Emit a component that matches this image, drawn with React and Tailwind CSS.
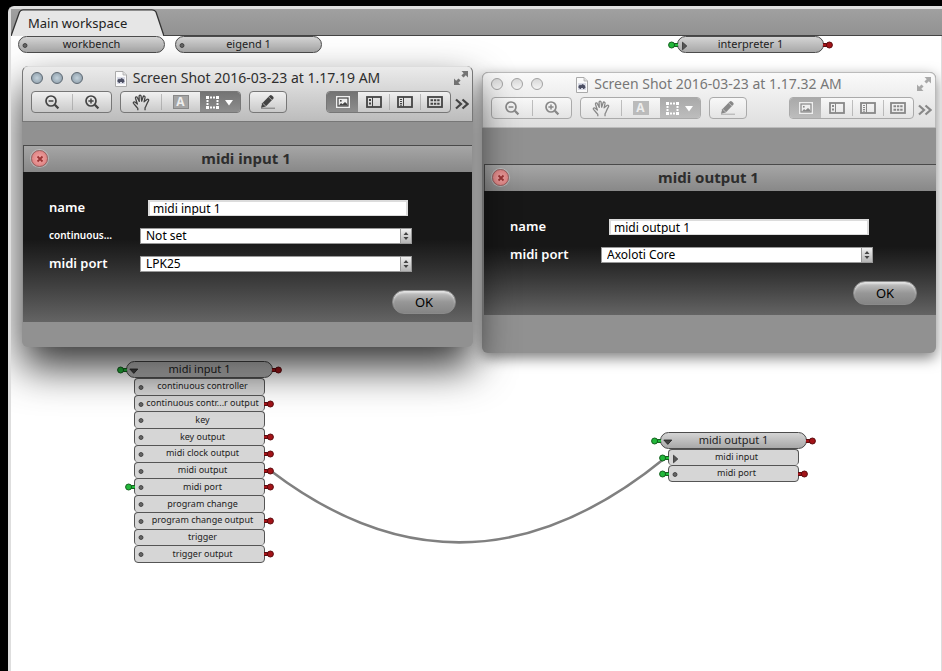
import React from "react";

const inputRows = [
  { name: "continuous controller" },
  { name: "continuous contr...r output", out: true },
  { name: "key" },
  { name: "key output", out: true },
  { name: "midi clock output", out: true },
  { name: "midi output", out: true },
  { name: "midi port", input: true, out: true },
  { name: "program change" },
  { name: "program change output", out: true },
  { name: "trigger" },
  { name: "trigger output", out: true },
];

const outputRows = [
  { name: "midi input", input: true, arrow: true },
  { name: "midi port", input: true, out: true },
];

function GreenPin() {
  return (
    <svg className="absolute top-1/2 right-full -mt-1 h-2 w-2.5" viewBox="0 0 10 8" aria-hidden="true">
      <rect x="4" y="2.5" width="7" height="3" fill="#22b83a" stroke="#14601f" strokeWidth="1" />
      <circle cx="3.6" cy="4" r="3" fill="#22b83a" stroke="#14601f" strokeWidth="1" />
    </svg>
  );
}

function RedPin() {
  return (
    <svg className="absolute top-1/2 left-full -mt-1 h-2 w-2.5" viewBox="0 0 10 8" aria-hidden="true">
      <rect x="-1" y="2.5" width="7" height="3" fill="#a31318" stroke="#5c0b0e" strokeWidth="1" />
      <circle cx="6.4" cy="4" r="3" fill="#a31318" stroke="#5c0b0e" strokeWidth="1" />
    </svg>
  );
}

function Marker({ kind }) {
  return (
    <svg className="absolute top-1/2 left-0.5 -mt-1 h-2.5 w-2.5" viewBox="0 0 10 10" aria-hidden="true">
      {kind === "dot" && <circle cx="4" cy="4.500" r="2" fill="#666" stroke="#333" strokeWidth="0.8" />}
      {kind === "right" && <path d="M2.500 1.200v7.600L6.800 5z" fill="#555" stroke="#333" strokeWidth="0.8" />}
      {kind === "down" && <path d="M.8 3h8L4.800 7.400z" fill="#444" stroke="#222" strokeWidth="0.8" />}
    </svg>
  );
}

function Node({ place, title, marker, pins, rows, rowsHeight }) {
  return (
    <div className={`absolute w-[147px] ${place}`}>
      <div className="relative flex h-[17px] items-center justify-center rounded-full border border-[#4c4c4c] bg-linear-to-b from-[#d4d4d4] to-[#a8a8a8] pb-px text-[11px] leading-4 text-[#222]">
        {pins && <GreenPin />}
        <span className="absolute inset-y-0 left-0 w-3">
          <Marker kind={marker} />
        </span>
        {title}
        {pins && <RedPin />}
      </div>
      {rows && (
        <ul className={`mr-2 ml-2 flex flex-col ${rowsHeight}`}>
          {rows.map((r) => (
            <li
              key={r.name}
              className="relative flex flex-1 items-center justify-center rounded-sm border border-b-0 border-[#555] bg-[#d6d6d6] pb-px pl-1.5 text-[9px] leading-3 whitespace-nowrap text-[#222] last:border-b"
            >
              {r.input && <GreenPin />}
              <Marker kind={r.arrow ? "right" : "dot"} />
              {r.name}
              {r.out && <RedPin />}
            </li>
          ))}
        </ul>
      )}
    </div>
  );
}

function Magnifier({ plus }) {
  return (
    <svg className="h-4 w-4" viewBox="0 0 16 16" fill="none" stroke="currentColor" aria-hidden="true">
      <circle cx="7" cy="7" r="5" strokeWidth="1.700" />
      <path d="M10.800 10.800L14.400 14.400" strokeWidth="2.200" />
      <path d={plus ? "M4.400 7h5.200M7 4.400v5.200" : "M4.600 7h4.800"} strokeWidth="1.500" />
    </svg>
  );
}

function Hand() {
  return (
    <svg className="h-[17px] w-[18px]" viewBox="0 0 16 16" fill="none" stroke="currentColor" strokeWidth="1.200" strokeLinejoin="round" aria-hidden="true">
      <path d="M5 15.300V13.500C3.500 12 2.500 10.500.9 8.800.3 7.800 1.600 6.900 2.600 7.700L4.600 9.400 2.800 4C2.500 2.600 4.100 2.200 4.600 3.400L6.400 7 6.200 2C6.200.7 8 .7 8.100 2L8.600 6.800 10 2.600C10.400 1.400 12 1.900 11.800 3.200L10.900 7.400 13.600 5.200C14.700 4.400 15.800 5.300 15 6.400 13.500 8.800 13 10.800 11.800 13V15.300" />
    </svg>
  );
}

function Marquee() {
  return (
    <svg className="h-[13px] w-7" viewBox="0 0 28 13" fill="#fff" aria-hidden="true">
      <path d="M0 0h3v3H0zM10 0h3v3h-3zM0 10h3v3H0zM10 10h3v3h-3z" />
      <path d="M4 .5h2v2H4zM7 .5h2v2H7zM4 10.500h2v2H4zM7 10.500h2v2H7zM.5 4h2v2h-2zM.5 7h2v2h-2zM10.500 4h2v2h-2zM10.500 7h2v2h-2z" />
      <path d="M19 4h8L23 9.500z" />
    </svg>
  );
}

function Pencil() {
  return (
    <svg className="h-4 w-4" viewBox="0 0 16 16" aria-hidden="true">
      <path d="M2.200 9.300L9.800 1.500q1-.9 2.100 0l1.300 1.200q1 1 .1 2L5.800 12.400 1 13.700z" fill="currentColor" />
      <path d="M9 3.200l3 3M2.800 9.400l3 2.700" stroke="#ddd" strokeWidth="0.7" />
      <path d="M1 14.200h14" stroke="currentColor" strokeWidth="0.9" opacity="0.7" />
    </svg>
  );
}

function ViewIcon({ kind }) {
  return (
    <svg className="h-3 w-4" viewBox="0 0 16 12" fill="none" stroke="currentColor" aria-hidden="true">
      {kind === "image" && (
        <>
          <rect x="1" y="0" width="14" height="12" fill="#eee" stroke="none" />
          <rect x="3" y="2" width="10" height="8" strokeWidth="1.200" />
          <path d="M4 9.500L6 7l1.500 1.200L10 6l2.200 2v1.500z" fill="currentColor" stroke="none" />
          <rect x="5" y="4" width="1.600" height="1.600" fill="currentColor" stroke="none" />
        </>
      )}
      {kind !== "image" && <rect x="1" y="1" width="14" height="10" strokeWidth="1.800" />}
      {kind === "thumbs" && (
        <>
          <path d="M6.500 1v10" strokeWidth="1" />
          <path d="M3 3h2v2H3zM3 6.500h2v2H3z" fill="currentColor" stroke="none" />
        </>
      )}
      {kind === "toc" && (
        <>
          <path d="M6.500 1v10" strokeWidth="1" />
          <path d="M3 3.500h2M3 5.500h2M3 7.500h2M3 9.200h2" strokeWidth="1" />
        </>
      )}
      {kind === "sheet" && (
        <path d="M3.500 3.200H6v2H3.500zM6.900 3.200h2.400v2H6.900zM10.200 3.200h2.400v2h-2.400zM3.500 6.700H6v2H3.500zM6.900 6.700h2.400v2H6.900zM10.200 6.700h2.400v2h-2.400z" fill="currentColor" stroke="none" />
      )}
    </svg>
  );
}

function DocIcon() {
  return (
    <svg className="h-4 w-3" viewBox="0 0 12 16" aria-hidden="true">
      <path d="M.5.500h7.500l3.500 3.500v11.500H.5z" fill="#fafafa" stroke="#aaa" />
      <path d="M8 .5v3.500h3.500" fill="#ddd" stroke="#aaa" strokeWidth="0.8" />
      <rect x="2" y="6" width="8" height="7" fill="#d9dbe6" />
      <path d="M2.500 9l1.500-1.500 1 .8L6.500 7 9 8.500 9.500 11h-1v1H7v-1H5v1H3.500v-1h-1z" fill="#4c4f63" />
    </svg>
  );
}

function ToolButton({ label, pressed, active, width, divider, children }) {
  const fill = pressed ? (active ? "bg-linear-to-b from-[#737373] to-[#8e8e8e]" : "bg-linear-to-b from-[#a9a9a9] to-[#bdbdbd]") : "";
  return (
    <button type="button" aria-label={label} className={`relative flex h-full items-center justify-center ${width} ${fill}`}>
      {divider && <span className="absolute inset-y-0.5 left-0 w-px bg-[#999]/60" />}
      {children}
    </button>
  );
}

function PreviewWindow({ place, active, file, topStrip, bottomStrip, children }) {
  const chrome = active
    ? "border-[#777] border-t-[#ddd] bg-linear-to-b from-[#ebebeb] to-[#bcbcbc] text-[#444]"
    : "border-[#bbb] bg-linear-to-b from-[#fafafa] to-[#dedede] text-[#888]";
  const group = active
    ? "border-[#777] bg-linear-to-b from-[#f1f1f1] to-[#c9c9c9]"
    : "border-[#aaa] bg-linear-to-b from-[#f8f8f8] to-[#e4e4e4]";
  const light = active
    ? "border-[#5d6872] bg-radial from-[#c3d2dc] to-[#8797a3]"
    : "border-[#a2a2a2] bg-linear-to-b from-[#d8d8d8] to-[#f4f4f4]";
  const shadow = active ? "shadow-[0_20px_42px_rgba(0,0,0,0.8)]" : "shadow-[0_5px_14px_rgba(0,0,0,0.5)]";
  const groupBase = `flex h-[22px] items-center overflow-hidden rounded border ${group}`;
  return (
    <section className={`absolute flex flex-col overflow-hidden rounded-md bg-[#919191] ${place} ${shadow}`}>
      <header className={`h-14 rounded-t-md border ${chrome}`}>
        <div className="relative flex h-6 items-center justify-center gap-1.5">
          <div className="absolute top-[5px] left-2 flex gap-2">
            {["Close", "Minimise", "Zoom"].map((l) => (
              <button key={l} type="button" aria-label={l} className={`h-3 w-3 rounded-full border ${light}`} />
            ))}
          </div>
          <DocIcon />
          <h1 className={`pb-0.5 text-[14px] leading-5 ${active ? "text-[#2e2e2e]" : "text-[#777]"}`}>{file}</h1>
          <button type="button" aria-label="Full screen" className="absolute top-1 right-1 opacity-70">
            <svg className="h-3.5 w-3.5" viewBox="0 0 14 14" fill="currentColor" aria-hidden="true">
              <path d="M7.500 0H14v6.500l-2.200-2.200L9.500 6.600 7.400 4.500l2.300-2.300zM0 7.500v6.500h6.500l-2.200-2.200L6.600 9.500 4.500 7.400 2.200 9.700z" />
            </svg>
          </button>
        </div>
        <div className="flex items-center gap-2 pr-[3px] pl-2">
          <div className={groupBase}>
            <ToolButton label="Zoom out" width="w-10"><Magnifier /></ToolButton>
            <ToolButton label="Zoom in" width="w-[39px]" divider><Magnifier plus /></ToolButton>
          </div>
          <div className={groupBase}>
            <ToolButton label="Move" width="w-10"><Hand /></ToolButton>
            <ToolButton label="Text" width="w-[39px]" divider>
              <span className={`flex h-3.5 w-4 items-center justify-center border font-['Open_Sans',sans-serif] text-[12px] leading-3 font-bold text-[#eee] ${active ? "border-[#888] bg-[#a5a5a5]" : "border-[#bbb] bg-[#bbb]"}`}>A</span>
            </ToolButton>
            <ToolButton label="Select" width="w-10" pressed active={active}><Marquee /></ToolButton>
          </div>
          <div className={groupBase}>
            <ToolButton label="Annotate" width="w-9"><Pencil /></ToolButton>
          </div>
          <div className={`ml-auto ${groupBase}`}>
            <ToolButton label="Content only" width="w-[31px]" pressed active={active}><ViewIcon kind="image" /></ToolButton>
            <ToolButton label="Thumbnails" width="w-[31px]"><ViewIcon kind="thumbs" /></ToolButton>
            <ToolButton label="Table of contents" width="w-[31px]" divider><ViewIcon kind="toc" /></ToolButton>
            <ToolButton label="Contact sheet" width="w-[30px]" divider><ViewIcon kind="sheet" /></ToolButton>
          </div>
          <button type="button" aria-label="More tools" className="-ml-1">
            <svg className="h-5 w-3.5 pt-1" viewBox="0 0 14 16" fill="none" stroke="currentColor" strokeWidth="2.200" aria-hidden="true">
              <path d="M1 3.500l5 4.500-5 4.500M7.500 3.500l5 4.500-5 4.500" />
            </svg>
          </button>
        </div>
      </header>
      <div className={topStrip} />
      {children}
      <div className={bottomStrip} />
    </section>
  );
}

function DevicePanel({ title, inset, bottomPad, children }) {
  return (
    <div className={inset}>
      <div className="relative flex h-[27px] items-center justify-center border-t border-l border-[#4a4a4a] bg-linear-to-b from-[#a6a6a6] to-[#888]">
        <button type="button" aria-label={`Close ${title}`} className="absolute top-1 left-[7px] flex size-[17px] items-center justify-center rounded-full border border-[#9a5f5f] bg-radial from-[#f2a9a9] to-[#d87676] ring-1 ring-white/30">
          <svg className="size-2" viewBox="0 0 8 8" stroke="#9c3434" strokeWidth="1.800" aria-hidden="true">
            <path d="M1.500 1.500l5 5M6.500 1.500l-5 5" />
          </svg>
        </button>
        <h2 className="pr-1 pb-0.5 text-[15px] leading-5 font-bold text-[#2d2d2d]">{title}</h2>
      </div>
      <form className={`bg-linear-to-b from-[#171717] from-45% to-[#646464] pt-7 pl-[26px] ${bottomPad}`}>
        <div className="flex w-[363px] flex-col gap-3">{children}</div>
        <div className="mt-4.5 flex w-[407px] justify-end">
          <button
            type="button"
            className="h-6 w-16 rounded-full border border-[#8a8a8a] bg-linear-to-b from-[#c9c9c9] via-[#979797] to-[#858585] text-[13px] leading-5 text-black shadow-[inset_0_2px_2px_rgba(255,255,255,0.5)]"
          >
            OK
          </button>
        </div>
      </form>
    </div>
  );
}

function Field({ id, label, small, children }) {
  return (
    <div className="flex h-4 items-center">
      <label htmlFor={id} className={`w-[91px] shrink-0 pb-0.5 leading-4 font-semibold text-white ${small ? "text-[10px]" : "text-[13px]"}`}>
        {label}
      </label>
      {children}
    </div>
  );
}

function NameInput({ id, value }) {
  return (
    <input
      id={id}
      type="text"
      defaultValue={value}
      className="mr-1 ml-2 h-4 min-w-0 flex-1 border-2 border-b border-[#dcdcdc] bg-white px-[3px] text-[12px] leading-3 text-black outline-none"
    />
  );
}

function PortSelect({ id, value }) {
  return (
    <div className="relative flex h-4 flex-1">
      <select id={id} defaultValue={value} className="h-4 w-full appearance-none border border-[#999] bg-white pl-[5px] text-[12px] leading-3 text-black outline-none">
        <option>{value}</option>
      </select>
      <span className="pointer-events-none absolute inset-y-0 right-0 flex w-3 items-center justify-center border border-[#999] bg-linear-to-b from-[#f0f0f0] to-[#b5b5b5]">
        <svg className="h-2 w-1.5" viewBox="0 0 6 8" fill="#444" aria-hidden="true">
          <path d="M3 0l2.500 3h-5zM3 8L.5 5h5z" />
        </svg>
      </span>
    </div>
  );
}

export default function App() {
  return (
    <div className="flex min-h-screen flex-col overflow-hidden bg-black pt-1.5 pl-2 font-['Noto_Sans','Open_Sans',sans-serif]">
      <main className="flex flex-1 flex-col rounded-tl-md border-t-[3px] border-l-[3px] border-[#dedede] bg-[#999]">
        <nav className="flex h-[27px] border-b border-[#444] bg-linear-to-b from-[#a0a0a0] to-[#929292]">
          <button type="button" className="relative h-[27px] w-[153px] pl-[17px] text-left text-[13px] leading-6 text-[#222]">
            <svg className="absolute inset-0 h-[27px] w-[153px]" viewBox="0 0 153 27" aria-hidden="true">
              <path d="M0 27L8.500 3Q9.500.800 12 .8H141Q144 .8 145 3L153 27z" fill="#e6e6e6" />
              <path d="M0 27L8.500 3Q9.500.800 12 .8H141Q144 .8 145 3L153 27" fill="none" stroke="#333" strokeWidth="1.300" />
            </svg>
            <span className="relative">Main workspace</span>
          </button>
        </nav>
        <div className="relative flex-1 overflow-hidden border-r border-[#ddd] bg-white">
          <Node place="top-0 left-[7px]" title="workbench" marker="dot" />
          <Node place="top-0 left-[164px]" title="eigend 1" marker="dot" />
          <Node place="top-0 left-[666px]" title="interpreter 1" marker="right" pins />

          <svg className="absolute top-[400px] left-[240px] h-[120px] w-[440px]" viewBox="0 0 440 120" fill="none" aria-hidden="true">
            <path d="M20 35Q216 184 414 22" stroke="#808080" strokeWidth="2.500" />
          </svg>

          <Node place="top-[325px] left-[115px]" title="midi input 1" marker="down" pins rows={inputRows} rowsHeight="h-[185px]" />
          <Node place="top-[396px] left-[649px]" title="midi output 1" marker="down" pins rows={outputRows} rowsHeight="h-[33px]" />

          <PreviewWindow
            place="top-[36px] left-[471px] w-[454px]"
            file="Screen Shot 2016-03-23 at 1.17.32 AM"
            topStrip="h-9"
            bottomStrip="h-[38px]"
          >
            <DevicePanel title="midi output 1" inset="pl-0.5" bottomPad="pb-2.5">
              <Field id="out-name" label="name"><NameInput id="out-name" value="midi output 1" /></Field>
              <Field id="out-port" label="midi port"><PortSelect id="out-port" value="Axoloti Core" /></Field>
            </DevicePanel>
          </PreviewWindow>

          <PreviewWindow
            active
            place="top-[30px] left-[11px] w-[451px]"
            file="Screen Shot 2016-03-23 at 1.17.19 AM"
            topStrip="h-[23px]"
            bottomStrip="h-[25px]"
          >
            <DevicePanel title="midi input 1" inset="px-px" bottomPad="pb-2">
              <Field id="in-name" label="name"><NameInput id="in-name" value="midi input 1" /></Field>
              <Field id="in-cc" label="continuous..." small><PortSelect id="in-cc" value="Not set" /></Field>
              <Field id="in-port" label="midi port"><PortSelect id="in-port" value="LPK25" /></Field>
            </DevicePanel>
          </PreviewWindow>
        </div>
      </main>
    </div>
  );
}
